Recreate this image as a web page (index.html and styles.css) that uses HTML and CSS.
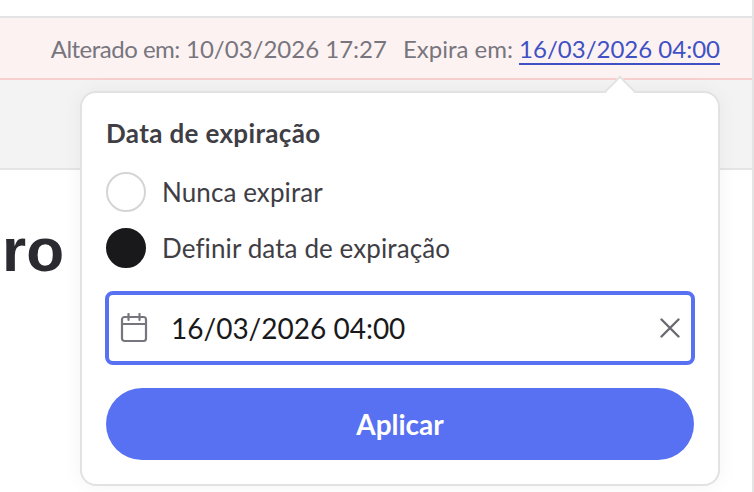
FILE: index.html
```html
<html>
<head>
    <title>Data de expiração</title>
    <link rel="stylesheet" href="styles.css">
</head>
<body>
    <div class="page">
        <div class="top-space"></div>
        <div class="info-bar">
            <span><span class="info-label">Alterado em:</span> 10/03/2026 17:27</span>
            <span>Expira em: <a class="expire-link" href="#">16/03/2026 04:00</a></span>
        </div>
        <div class="toolbar"></div>
        <div class="content">
            <h1 class="title">ro</h1>
        </div>
    </div>

    <div class="popover">
        <div class="popover-arrow"></div>
        <h2 class="popover-title">Data de expiração</h2>
        <div class="radio-row">
            <span class="radio"></span>
            <span>Nunca expirar</span>
        </div>
        <div class="radio-row">
            <span class="radio radio-checked"></span>
            <span>Definir data de expiração</span>
        </div>
        <div class="date-input">
            <svg class="icon-calendar" width="28" height="30" viewBox="0 0 28 30" fill="none" stroke="#77767e" stroke-width="2.200" stroke-linecap="round" stroke-linejoin="round">
                <rect x="2" y="4" width="24" height="24" rx="2.500"/>
                <path d="M2 11h24M8.500 1v6M19.500 1v6"/>
            </svg>
            <span class="date-value">16/03/2026 04:00</span>
            <svg class="icon-clear" width="20" height="20" viewBox="0 0 20 20" fill="none" stroke="#6b6a72" stroke-width="2.400" stroke-linecap="round">
                <path d="M1.500 1.500l17 17M18.500 1.500l-17 17"/>
            </svg>
        </div>
        <button class="apply-button">Aplicar</button>
    </div>
</body>
</html>
```

FILE: styles.css
```css
* {
    box-sizing: border-box;
}
body {
    margin: 0;
    height: 492px;
    overflow: hidden;
    background-color: #fff;
    font-family: Lato, sans-serif;
    color: #3f3e45;
}
.page {
    height: 492px;
    border-right: 2px solid #e4e4e4;
}
.top-space {
    height: 18px;
    background-color: #fff;
    border-bottom: 2px solid #e4e4e4;
}
.info-bar {
    display: flex;
    justify-content: flex-end;
    align-items: center;
    gap: 16px;
    height: 62px;
    padding-right: 32px;
    background-color: #fdf2f2;
    border-bottom: 2px solid #f7cfcf;
    font-size: 24px;
    color: #77767e;
}
.info-label {
    letter-spacing: -0.5px;
}
.expire-link {
    color: #3f51c4;
    text-decoration: none;
    border-bottom: 2px solid #3f51c4;
}
.toolbar {
    height: 90px;
    background-color: #f3f3f3;
    border-bottom: 2px solid #e4e4e4;
}
.content {
    padding: 44px 0 0 2px;
}
.title {
    margin: 0;
    font-family: "Liberation Sans", sans-serif;
    font-size: 62px;
    line-height: 72px;
    font-weight: 700;
    color: #2b2a30;
}
.popover {
    position: absolute;
    left: 80px;
    top: 91px;
    width: 640px;
    height: 395px;
    padding: 24px;
    background-color: #fff;
    border: 2px solid #e2e2e2;
    border-radius: 16px;
    box-shadow: 0 0 20px rgba(0, 0, 0, 0.05);
}
.popover-arrow {
    position: absolute;
    top: -13px;
    right: 87px;
    width: 22px;
    height: 22px;
    background-color: #fff;
    border-top: 2px solid #e2e2e2;
    border-left: 2px solid #e2e2e2;
    transform: rotate(45deg);
}
.popover-title {
    margin: 0 0 23px 0;
    font-size: 26px;
    line-height: 32px;
    font-weight: 700;
    letter-spacing: 0.35px;
}
.radio-row {
    display: flex;
    align-items: center;
    gap: 16px;
    height: 40px;
    margin-bottom: 16px;
    font-size: 26px;
    letter-spacing: 0.1px;
}
.radio {
    width: 40px;
    height: 40px;
    border: 2px solid #d5d5d8;
    border-radius: 50%;
}
.radio-checked {
    background-color: #19191b;
    border-color: #19191b;
}
.date-input {
    display: flex;
    align-items: center;
    height: 74px;
    margin: 23px -1px 0 -1px;
    padding: 0 11px;
    border: 4px solid #5870f2;
    border-radius: 8px;
}
.date-value {
    flex: 1;
    margin-left: 23px;
    font-size: 28px;
    color: #19191b;
}
.apply-button {
    display: block;
    width: 100%;
    height: 72px;
    margin-top: 23px;
    border: none;
    border-radius: 36px;
    background-color: #5870f2;
    color: #fff;
    font-family: inherit;
    font-size: 28px;
    font-weight: 700;
}
```
